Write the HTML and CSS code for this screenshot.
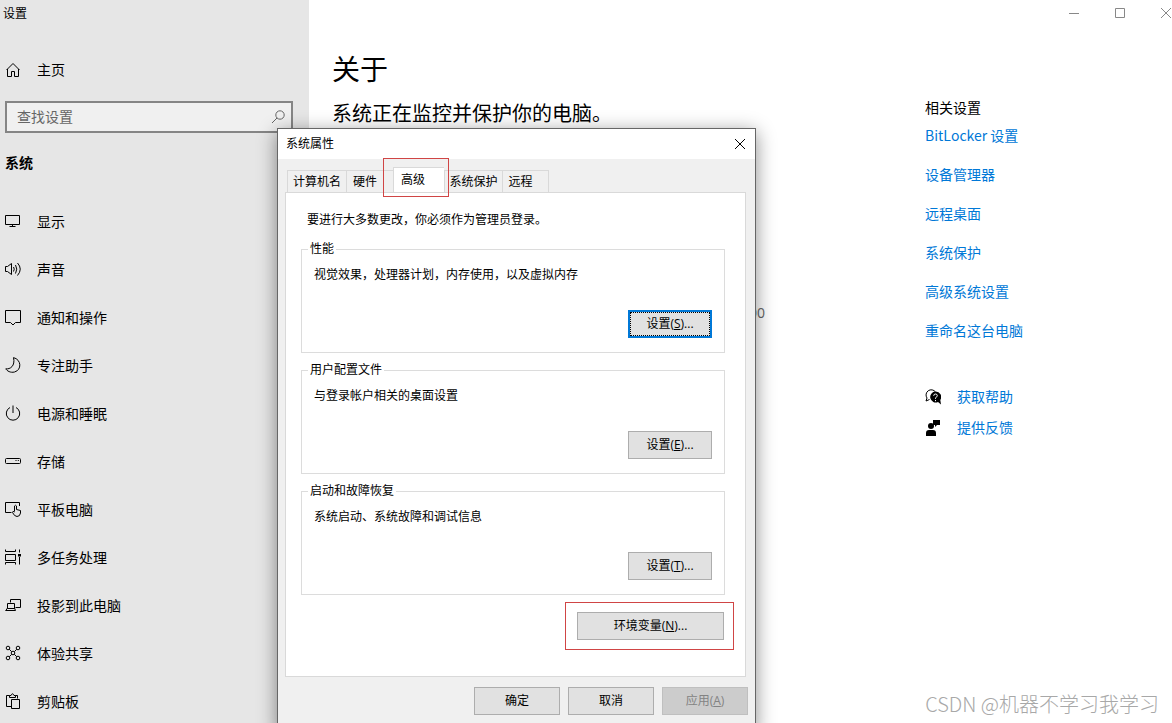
FILE: index.html
```html
<!DOCTYPE html>
<html lang="zh-CN">
<head>
<meta charset="utf-8">
<title>设置</title>
<link rel="stylesheet" href="styles.css">
</head>
<body>
<div class="settings">
  <aside class="sidebar">
    <div class="app-title">设置</div>
    <a class="home" href="#">
      <svg class="icon" viewBox="0 0 16 16"><path d="M1.500 8L8 1.500L14.500 8M2.500 7V14.500H6.500V9.500H9.500V14.500H13.500V7"/></svg>
      <span>主页</span>
    </a>
    <div class="search">
      <input type="text" placeholder="查找设置" aria-label="查找设置">
      <svg class="icon search-icon" viewBox="0 0 16 16"><circle cx="10" cy="6" r="4.200"/><path d="M7 9L2 14"/></svg>
    </div>
    <h2 class="section">系统</h2>
    <nav class="nav">
      <a href="#"><svg class="icon" viewBox="0 0 16 16"><path d="M.5 2.500H14.500V11.500H.5ZM7.500 11.500V13.500M4.500 13.500H10.500"/></svg><span>显示</span></a>
      <a href="#"><svg class="icon" viewBox="0 0 16 16"><path d="M.5 5.500H2.500L6.500 2.500V13.500L2.500 10.500H.5ZM8.500 6Q10 8 8.500 10.500M10.500 4Q13 8 10.500 12.500M12.500 2Q18 8 12.500 14.500"/></svg><span>声音</span></a>
      <a href="#"><svg class="icon" viewBox="0 0 16 16"><path d="M.5 1.500H15.500V13.500H10.500L8 16L5.500 13.500H.5Z"/></svg><span>通知和操作</span></a>
      <a href="#"><svg class="icon" viewBox="0 0 16 16"><path d="M8.500 .6C16.500 2.500 17 13 9.500 15C5.500 16 2 14 .8 11.800C5 12.500 10.500 9 8.500 .6Z"/></svg><span>专注助手</span></a>
      <a href="#"><svg class="icon" viewBox="0 0 16 16"><path d="M5 2.500A6.700 6.700 0 1 0 11 2.500M8 .5V8"/></svg><span>电源和睡眠</span></a>
      <a href="#"><svg class="icon" viewBox="0 0 16 16"><rect x=".5" y="5.500" width="15" height="5" rx="1"/><path d="M10.500 7.500H11.500M12.800 7.500H13.800"/></svg><span>存储</span></a>
      <a href="#"><svg class="icon" viewBox="0 0 16 16"><path d="M6.500 11.500H.5V1.500H14.500V5M9.500 10.500V5Q10.500 3.500 11.500 5V8.500L15.500 9.500V12Q15 15.500 12 15.500Q9.500 15.500 7.500 11.500Q7.500 9.500 9.500 11"/></svg><span>平板电脑</span></a>
      <a href="#"><svg class="icon" viewBox="0 0 16 16"><path d="M.5 .5V2.500H10.500V.5M.5 5.500H10.500V11.500H.5ZM.5 15.500V13.500H10.500V15.500M14.500 .5V3.500M14.500 8V15.500"/><path class="solid" d="M13 5H16V7.500H13Z"/></svg><span>多任务处理</span></a>
      <a href="#"><svg class="icon" viewBox="0 0 16 16"><path d="M5.500 5.500V2.500H15.500V10.500H10.500M2.500 6.500H9.500V11.500H2.500ZM.5 13.500H10.500M.8 13.500L2.500 11M9.500 11L10.500 13.500"/></svg><span>投影到此电脑</span></a>
      <a href="#"><svg class="icon" viewBox="0 0 16 16"><circle cx="3" cy="3" r="1.800"/><circle cx="13" cy="3" r="1.800"/><circle cx="3" cy="13" r="1.800"/><circle cx="13" cy="13" r="1.800"/><circle cx="8" cy="8" r="1.800"/><path d="M4.300 4.300L6.700 6.700M11.700 4.300L9.300 6.700M4.300 11.700L6.700 9.300M11.700 11.700L9.300 9.300"/></svg><span>体验共享</span></a>
      <a href="#"><svg class="icon" viewBox="0 0 16 16"><path d="M6 13.500H1.500V2.500H4.500M10.500 2.500H12.500V5.500M4.500 4.500V2.500H6Q7.500 -1 9 2.500H10.500V4.500ZM6.500 6.500H14.500V15.500H6.500Z"/></svg><span>剪贴板</span></a>
    </nav>
  </aside>

  <main class="main">
    <div class="window-controls">
      <button type="button" aria-label="最小化"><svg viewBox="0 0 10 10"><path d="M0 5.500H10"/></svg></button>
      <button type="button" aria-label="最大化"><svg viewBox="0 0 10 10"><path d="M.5 .5H9.500V9.500H.5Z"/></svg></button>
      <button type="button" aria-label="关闭"><svg viewBox="0 0 10 10"><path d="M0 0L10 10M10 0L0 10"/></svg></button>
    </div>
    <div class="columns">
      <section class="about">
        <h1>关于</h1>
        <p class="status">系统正在监控并保护你的电脑。</p>
        <p class="device-id">00</p>
      </section>
      <section class="related">
        <h3>相关设置</h3>
        <ul class="links">
          <li><a href="#">BitLocker 设置</a></li>
          <li><a href="#">设备管理器</a></li>
          <li><a href="#">远程桌面</a></li>
          <li><a href="#">系统保护</a></li>
          <li><a href="#">高级系统设置</a></li>
          <li><a href="#">重命名这台电脑</a></li>
        </ul>
        <div class="support">
          <a href="#"><svg class="icon" viewBox="0 0 16 16"><path d="M4.500 10.500L1 12L2 9A5 5 0 1 1 10.500 3"/><path class="solid" d="M10.500 2.500A5.500 5.500 0 1 0 13 13L16 15.500L15.300 11A5.500 5.500 0 0 0 10.500 2.500Z"/><path class="mark" d="M8.700 6.800Q8.700 5 10.500 5Q12.300 5 12.300 6.700Q12.300 7.800 10.500 8.800V9.800M10.500 11V12.200"/></svg><span>获取帮助</span></a>
          <a href="#"><svg class="icon" viewBox="0 0 16 16"><path class="solid" d="M8 0H15V5H12L10 7V5H8ZM1 16V13Q1 10 4 10H8Q11 10 11 13V16Z"/><circle class="solid" cx="6" cy="6" r="3"/></svg><span>提供反馈</span></a>
        </div>
      </section>
    </div>
  </main>
</div>

<div class="dialog" role="dialog" aria-labelledby="dialog-title">
  <header class="dialog-head">
    <span id="dialog-title">系统属性</span>
    <button type="button" aria-label="关闭"><svg viewBox="0 0 12 12"><path d="M1 1L11 11M11 1L1 11"/></svg></button>
  </header>
  <div class="tabs" role="tablist">
    <button type="button" role="tab" class="tab">计算机名</button>
    <button type="button" role="tab" class="tab tab-hardware">硬件</button>
    <button type="button" role="tab" class="tab tab-active" aria-selected="true">高级<span class="callout tab-callout"></span></button>
    <button type="button" role="tab" class="tab tab-protect">系统保护</button>
    <button type="button" role="tab" class="tab tab-remote">远程</button>
  </div>
  <div class="panel" role="tabpanel">
    <p class="note">要进行大多数更改，你必须作为管理员登录。</p>
    <fieldset class="group">
      <legend>性能</legend>
      <p>视觉效果，处理器计划，内存使用，以及虚拟内存</p>
      <button type="button" class="btn btn-focus">设置(<u>S</u>)...</button>
    </fieldset>
    <fieldset class="group">
      <legend>用户配置文件</legend>
      <p>与登录帐户相关的桌面设置</p>
      <button type="button" class="btn">设置(<u>E</u>)...</button>
    </fieldset>
    <fieldset class="group">
      <legend>启动和故障恢复</legend>
      <p>系统启动、系统故障和调试信息</p>
      <button type="button" class="btn">设置(<u>T</u>)...</button>
    </fieldset>
    <div class="env">
      <button type="button" class="btn btn-wide">环境变量(<u>N</u>)...</button>
    </div>
  </div>
  <footer class="dialog-foot">
    <button type="button" class="btn">确定</button>
    <button type="button" class="btn">取消</button>
    <button type="button" class="btn" disabled>应用(<u>A</u>)</button>
  </footer>
</div>
<div class="watermark">CSDN @机器不学习我学习</div>
</body>
</html>
```

FILE: styles.css
```css
* {
  box-sizing: border-box;
}

body {
  margin: 0;
  height: 100vh;
  overflow: hidden;
  position: relative;
  background: #fff;
  color: #000;
  font: 14px/20px "Open Sans", "Noto Sans CJK SC", sans-serif;
}

h1, h2, h3, p, ul {
  margin: 0;
  padding: 0;
  font-weight: 400;
}

a {
  color: inherit;
  text-decoration: none;
}

button {
  font: inherit;
  color: inherit;
}

svg {
  display: block;
  fill: none;
  stroke: currentColor;
}

.icon {
  width: 16px;
  height: 16px;
  flex: none;
}

.solid {
  fill: currentColor;
  stroke: none;
}

.mark {
  stroke: #fff;
}

/* Settings window */
.settings {
  display: flex;
  height: 100%;
}

.sidebar {
  flex: none;
  width: 309px;
  padding: 4px 16px 0 5px;
  background: #e6e6e6;
  overflow: hidden;
}

.app-title {
  font-size: 12px;
  margin-left: -2px;
}

.home {
  display: flex;
  align-items: center;
  gap: 16px;
  margin-top: 36px;
}

.search {
  display: flex;
  align-items: center;
  height: 32px;
  margin-top: 21px;
  padding: 0 5px 0 10px;
  border: 2px solid #858585;
  background: #f0f0f0;
  color: #666;
}

.search input {
  flex: 1;
  min-width: 0;
  padding: 0;
  border: 0;
  outline: 0;
  background: none;
  font: inherit;
}

.search input::placeholder {
  color: #666;
}

.section {
  margin-top: 20px;
  font-size: 14px;
  font-weight: 700;
}

.nav {
  display: flex;
  flex-direction: column;
  margin-top: 25px;
}

.nav a {
  display: flex;
  align-items: center;
  gap: 16px;
  height: 48px;
}

.nav .icon {
  margin-bottom: 2px;
}

.main {
  flex: 1;
  min-width: 0;
}

.window-controls {
  display: flex;
  justify-content: flex-end;
  gap: 36px;
  height: 26px;
  padding-right: 1px;
  color: #888;
}

.window-controls button {
  width: 10px;
  padding: 0;
  border: 0;
  background: none;
}

.window-controls svg {
  width: 10px;
  height: 10px;
}

.columns {
  display: flex;
}

.about {
  flex: 1;
  min-width: 0;
  padding: 23px 0 0 23px;
}

.about h1 {
  font-size: 28px;
  line-height: 40px;
}

.status {
  margin-top: 11px;
  font-size: 20px;
  line-height: 28px;
}

.device-id {
  width: 433px;
  margin-top: 175px;
  color: #666;
  text-align: right;
}

.related {
  flex: none;
  width: 247px;
  padding-top: 72px;
}

.related h3 {
  font-size: 14px;
}

.links {
  display: flex;
  flex-direction: column;
  gap: 19px;
  margin-top: 7px;
  list-style: none;
  color: #0078d7;
  font-family: "Noto Sans CJK SC", sans-serif;
}

.support {
  display: flex;
  flex-direction: column;
  gap: 11px;
  margin-top: 47px;
}

.support a {
  display: flex;
  align-items: center;
  gap: 16px;
}

.support span {
  color: #0078d7;
}

/* System properties dialog */
.dialog {
  position: absolute;
  left: 277px;
  top: 128px;
  width: 479px;
  padding-bottom: 16px;
  border: 1px solid #666;
  background: #f0f0f0;
  box-shadow: 0 4px 18px rgba(0, 0, 0, .45);
  font-size: 12px;
  line-height: 16px;
}

.dialog-head {
  display: flex;
  align-items: center;
  justify-content: space-between;
  height: 30px;
  padding: 0 9px 0 8px;
  background: #fff;
}

.dialog-head button {
  padding: 0;
  border: 0;
  background: none;
}

.dialog-head svg {
  width: 12px;
  height: 12px;
}

.tabs {
  display: flex;
  align-items: flex-end;
  height: 33px;
  padding-left: 9px;
}

.tab {
  width: 59px;
  height: 22px;
  padding: 0;
  border: 1px solid #d9d9d9;
  border-bottom: 0;
  border-right: 0;
  background: #f0f0f0;
  white-space: nowrap;
}

.tab-hardware {
  width: 47px;
  padding-right: 10px;
}

.tab-active {
  position: relative;
  width: 51px;
  height: 25px;
  padding-right: 12px;
  background: #fff;
}

.tab-protect {
  width: 58px;
}

.tab-remote {
  width: 47px;
  padding-right: 10px;
  border-right: 1px solid #d9d9d9;
}

.callout {
  position: absolute;
  border: 1px solid #d04545;
}

.tab-callout {
  inset: -10px -5px -5px -11px;
  z-index: 1;
}

.panel {
  margin: 0 9px 0 7px;
  padding: 19px 20px 26px 15px;
  border: 1px solid #d9d9d9;
  background: #fff;
}

.note {
  margin: 0 0 13px 6px;
}

.group {
  display: flex;
  flex-direction: column;
  min-width: 0;
  height: 112px;
  margin: 0 0 9px;
  padding: 10px 12px 14px;
  border: 1px solid #dcdcdc;
}

.group legend {
  margin-left: -6px;
  padding: 0 2px;
}

.group .btn {
  width: 84px;
  margin-top: 27px;
  align-self: flex-end;
}

.btn {
  width: 86px;
  height: 28px;
  padding: 0;
  border: 1px solid #adadad;
  background: #e1e1e1;
}

.btn-focus {
  border: 2px solid #0078d7;
  outline: 1px dotted #000;
  outline-offset: -3px;
}

.btn:disabled {
  border-color: #bfbfbf;
  background: #ccc;
  color: #838383;
}

.env {
  width: 169px;
  margin: -2px -9px 0 auto;
  padding: 9px;
  border: 1px solid #d04545;
  display: flex;
  justify-content: flex-end;
}

.btn-wide {
  width: 147px;
}

.dialog-foot {
  display: flex;
  justify-content: flex-end;
  gap: 8px;
  padding: 10px 7px 0;
}

.watermark {
  position: absolute;
  right: 13px;
  bottom: 5px;
  color: #a8a8a8;
  font: 300 20px/28px "Noto Sans CJK SC", sans-serif;
}
```
